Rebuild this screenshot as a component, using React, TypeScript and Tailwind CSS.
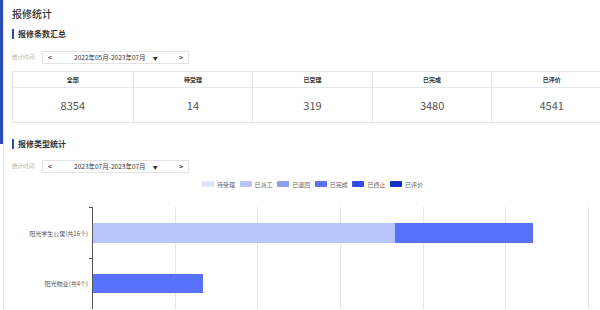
const stats = [
  { label: "全部", value: "8354" },
  { label: "待受理", value: "14" },
  { label: "已受理", value: "319" },
  { label: "已完成", value: "3480" },
  { label: "已评价", value: "4541" }
]

const legend = [
  { label: "待受理", color: "bg-[#dde3fb]" },
  { label: "已派工", color: "bg-[#b9c5fa]" },
  { label: "已退回", color: "bg-[#8ea1f4]" },
  { label: "已完成", color: "bg-[#5a72f5]" },
  { label: "已终止", color: "bg-[#2f4de2]" },
  { label: "已评价", color: "bg-[#1530c2]" }
]

function SectionTitle({ children }: { children: string }) {
  return (
    <div className="flex h-[11px] items-center gap-[4px]">
      <span className="h-[10px] w-[2px] bg-[#2c4cb4]" />
      <span className="text-[8px] font-bold leading-none text-[#333]">{children}</span>
    </div>
  )
}

function DateFilter({ range }: { range: string }) {
  return (
    <div className="flex items-center">
      <span className="w-[30px] whitespace-nowrap text-[5.5px] text-[#b5b5b5]">统计时间:</span>
      <div className="flex h-[13px] w-[147px] items-center border border-[#e3e3e3] px-[5px] text-[6.5px] text-[#333]">
        <span className="font-bold">&lt;</span>
        <span className="ml-[20px] w-[76px] whitespace-nowrap text-center">{range}</span>
        <span className="ml-[5px] text-[5px]">▼</span>
        <span className="ml-auto font-bold">&gt;</span>
      </div>
    </div>
  )
}

function StatsTable() {
  return (
    <div className="grid w-[600px] grid-cols-5 border border-[#e6e8f0]">
      {stats.map((s, i) => (
        <div key={s.label} className={i > 0 ? "border-l border-[#e6e8f0]" : ""}>
          <div className="flex h-[16px] items-center justify-center border-b border-[#e6e8f0] text-[6px] font-bold text-[#333]">
            {s.label}
          </div>
          <div className="flex h-[34px] items-center justify-center text-[11px] text-[#555]">
            {s.value}
          </div>
        </div>
      ))}
    </div>
  )
}

function TypeChart() {
  const grid = [175, 257, 340, 423, 505, 588]
  return (
    <div className="relative h-[102px] w-full">
      {grid.map((x) => (
        <div
          key={x}
          className="absolute top-0 bottom-0 w-px bg-[#e6e6e6]"
          style={{ left: x - 12 }}
        />
      ))}
      <div className="absolute top-0 bottom-0 left-[80px] w-px bg-[#555]" />
      <div className="absolute top-0 left-[77px] h-px w-[3px] bg-[#555]" />
      <div className="absolute top-[51px] left-[77px] h-px w-[3px] bg-[#555]" />
      <div className="absolute top-[16px] left-0 flex h-[20px] w-[76px] items-center justify-end whitespace-nowrap text-[6px] text-[#555]">
        阳光学生公寓(共16个)
      </div>
      <div className="absolute top-[16px] left-[81px] flex h-[20px]">
        <div className="w-[302px] bg-[#b9c6fb]" />
        <div className="w-[138px] bg-[#5872fb]" />
      </div>
      <div className="absolute top-[67px] left-0 flex h-[19px] w-[76px] items-center justify-end whitespace-nowrap text-[6px] text-[#555]">
        阳光物业(共4个)
      </div>
      <div className="absolute top-[67px] left-[81px] h-[19px] w-[110px] bg-[#5872fb]" />
    </div>
  )
}

export default function App() {
  return (
    <div
      className="flex h-[310px] w-[600px] overflow-hidden bg-white"
      style={{ fontFamily: '"Noto Sans CJK SC", "Noto Sans", sans-serif' }}
    >
      <div className="w-[3px] shrink-0">
        <div className="h-[144px] bg-[#2c4cb4]" />
      </div>
      <div className="min-w-0 flex-1 border-l border-[#e2e2e2] pl-[8px]">
        <h1 className="mt-[8px] text-[10px] leading-[12px] font-medium text-[#333]">报修统计</h1>
        <div className="mt-[8px]">
          <SectionTitle>报修条数汇总</SectionTitle>
        </div>
        <div className="mt-[12px]">
          <DateFilter range="2022年05月-2023年07月" />
        </div>
        <div className="mt-[7px]">
          <StatsTable />
        </div>
        <div className="mt-[15px]">
          <SectionTitle>报修类型统计</SectionTitle>
        </div>
        <div className="mt-[11px]">
          <DateFilter range="2023年07月-2023年07月" />
        </div>
        <div className="mt-[6px] flex h-[10px] items-center pl-[190px]">
          {legend.map((l) => (
            <div key={l.label} className="flex w-[37.6px] items-center gap-[3px]">
              <span className={`h-[6px] w-[12px] rounded-[1px] ${l.color}`} />
              <span className="text-[6px] text-[#666]">{l.label}</span>
            </div>
          ))}
        </div>
        <div className="mt-[18px]">
          <TypeChart />
        </div>
      </div>
    </div>
  )
}
